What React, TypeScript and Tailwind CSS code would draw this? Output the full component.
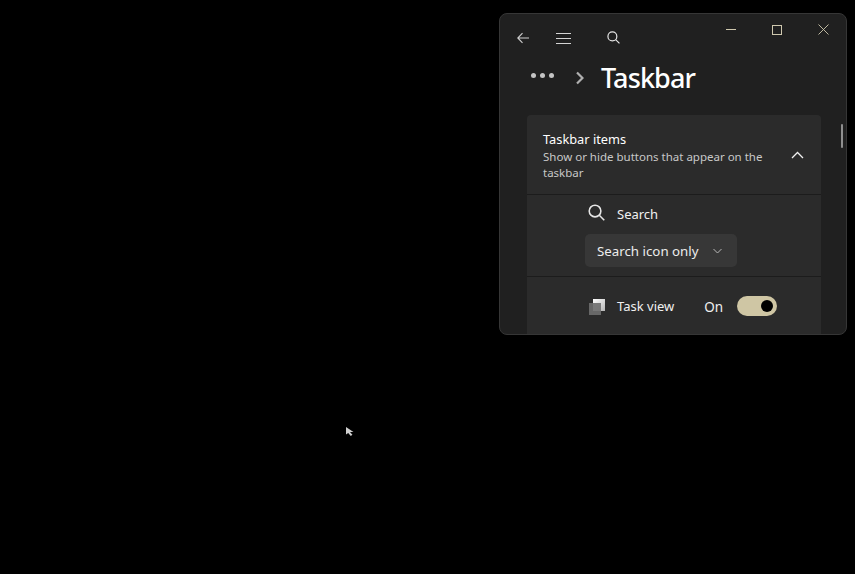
const font = { fontFamily: '"Noto Sans", "Open Sans", sans-serif' };

function Back() {
  return (
    <svg width="12" height="12" viewBox="0 0 12 12" fill="none" stroke="#cfcfcf" strokeWidth="1.1">
      <path d="M12 6H1M5.5 1.2L0.8 6l4.7 4.8" />
    </svg>
  );
}

function Burger() {
  return (
    <svg width="15" height="11" viewBox="0 0 15 11" fill="none" stroke="#d4d4d4" strokeWidth="1.1">
      <path d="M0 0.5h15M0 5.5h15M0 10.5h15" />
    </svg>
  );
}

function Lens({ size, width }: { size: number; width: number }) {
  return (
    <svg width={size} height={size} viewBox="0 0 14 14" fill="none" stroke="#e6e6e6" strokeWidth={width}>
      <circle cx="5.8" cy="5.8" r="4.8" />
      <path d="M9.3 9.3L13.4 13.4" />
    </svg>
  );
}

function TaskViewIcon() {
  return (
    <div className="relative w-4 h-4">
      <div className="absolute right-0 top-0 w-3 h-3 bg-gradient-to-br from-white to-[#b5b5b5]" />
      <div className="absolute left-0 bottom-0 w-3 h-3 bg-[#6e6e6e]/90" />
    </div>
  );
}

export default function App() {
  return (
    <div className="relative w-[855px] h-[574px] bg-black overflow-hidden" style={font}>
      <div className="absolute left-[499px] top-[13px] w-[348px] h-[322px] bg-[#202020] border border-[#363636] rounded-lg overflow-hidden flex flex-col">
        <div className="flex items-start h-[45px]">
          <div className="flex items-center pt-[18px] pl-[17px]">
            <Back />
            <div className="ml-[27px]"><Burger /></div>
            <div className="ml-[36px] -mt-px"><Lens size={13} width={1.3} /></div>
          </div>
          <div className="ml-auto flex items-center pt-[10px] pr-[17px]">
            <div className="w-[10px] h-px bg-[#cfc8ae]" />
            <div className="ml-[36px] w-[10px] h-[10px] border border-[#cfc8ae]" />
            <svg className="ml-[36px]" width="11" height="11" viewBox="0 0 11 11" fill="none" stroke="#cfc8ae" strokeWidth="0.9">
              <path d="M0.5 0.5l10 10M10.5 0.5l-10 10" />
            </svg>
          </div>
        </div>

        <div className="flex items-center h-[38px] pl-[31px]">
          <div className="flex gap-[4px] mb-[5px]">
            <div className="w-[5px] h-[5px] rounded-full bg-[#c4c4c4]" />
            <div className="w-[5px] h-[5px] rounded-full bg-[#c4c4c4]" />
            <div className="w-[5px] h-[5px] rounded-full bg-[#c4c4c4]" />
          </div>
          <svg className="ml-[22px]" width="8" height="14" viewBox="0 0 8 14" fill="none" stroke="#b0b0b0" strokeWidth="2.2">
            <path d="M1 1.5L6.5 7 1 12.5" />
          </svg>
          <div className="ml-[17px] mb-[2px] text-[27px] font-medium text-white leading-none tracking-[-0.9px]">Taskbar</div>
        </div>

        <div className="ml-[27px] mt-[18px] w-[294px] flex-1 bg-[#2b2b2b] rounded-t-[4px]">
          <div className="relative h-[80px] border-b border-[#1c1c1c] pl-[16px] pt-[15px]">
            <div className="text-[12.8px] text-white leading-[18px]">Taskbar items</div>
            <div className="text-[11.5px] text-[#c8c8c8] leading-[16px] w-[240px] mt-[1px]">
              Show or hide buttons that appear on the taskbar
            </div>
            <svg className="absolute right-[17px] top-[36px]" width="13" height="8" viewBox="0 0 13 8" fill="none" stroke="#f0f0f0" strokeWidth="1.3">
              <path d="M1 7l5.5-5.5L12 7" />
            </svg>
          </div>

          <div className="h-[82px] border-b border-[#1c1c1c] pl-[58px] pt-[9px]">
            <div className="flex items-center pl-[3px] h-[20px]">
              <div className="-mt-[4px]"><Lens size={17} width={1.3} /></div>
              <span className="ml-[12px] mt-[2px] text-[13px] text-[#f0f0f0]">Search</span>
            </div>
            <div className="mt-[10px] w-[152px] h-[33px] bg-[#373737] rounded-[5px] flex items-center pl-[12px]">
              <span className="mt-[2px] text-[13.3px] text-[#ececec] whitespace-nowrap">Search icon only</span>
              <svg className="ml-[14px]" width="9" height="6" viewBox="0 0 9 6" fill="none" stroke="#b8b8b8" strokeWidth="1">
                <path d="M0.5 1l4 4 4-4" />
              </svg>
            </div>
          </div>

          <div className="flex items-center pl-[62px] pt-[19px]">
            <TaskViewIcon />
            <span className="ml-[12px] text-[13px] text-[#f0f0f0]">Task view</span>
            <span className="ml-[30px] text-[13.5px] text-[#f0f0f0]">On</span>
            <div className="ml-[14px] mb-[2px] w-[40px] h-[20px] rounded-full bg-[#cfc6a4] flex items-center justify-end pr-[4px]">
              <div className="w-3 h-3 rounded-full bg-black" />
            </div>
          </div>
        </div>

        <div className="absolute right-[3px] top-[110px] w-[2px] h-[24px] rounded-full bg-[#8f8f8f]" />
      </div>

      <svg className="absolute left-[345px] top-[426px]" width="10" height="12" viewBox="0 0 10 12">
        <path d="M1 1v7.5l2.2-1.6 2.6 3 1.6-1.2-2.4-2.8H8.5z" fill="#cfcfcf" />
      </svg>
    </div>
  );
}
